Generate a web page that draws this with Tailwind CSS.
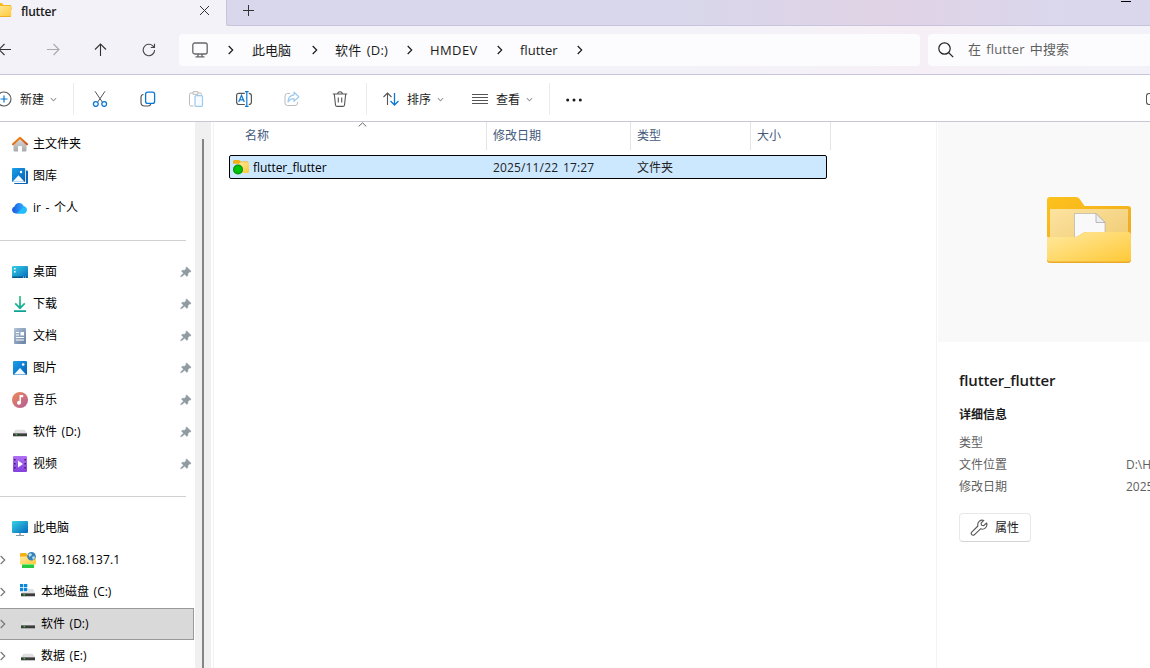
<!DOCTYPE html>
<html lang="zh-CN">
<head>
  <meta charset="UTF-8" />
  <meta name="viewport" content="width=device-width, initial-scale=1.0"/>
  <title>flutter - 文件资源管理器</title>
  <script src="https://cdn.jsdelivr.net/npm/@tailwindcss/browser@4"></script>
  <style>
    body {
      font-family: 'Open Sans', 'Noto Sans CJK SC', sans-serif;
      word-spacing: 1.5px;
    }
  </style>
</head>
<body class="w-[1150px] h-[668px] overflow-hidden bg-white text-xs leading-4 text-black flex flex-col">

  <!-- 公用图标 -->
  <svg class="absolute w-0 h-0">
    <defs>
      <linearGradient id="gFolder" x1="0" y1="0" x2="1" y2="1"><stop offset="0" stop-color="#ffe9a0"/><stop offset="1" stop-color="#ffc937"/></linearGradient>
      <linearGradient id="gTab" x1="0" y1="0" x2="1" y2="1"><stop offset="0" stop-color="#fdc21c"/><stop offset="1" stop-color="#eeaa1e"/></linearGradient>
      <linearGradient id="gInner" x1="0" y1="0" x2="1" y2="1"><stop offset="0" stop-color="#fde3a0"/><stop offset="1" stop-color="#eec970"/></linearGradient>
      <linearGradient id="gBlue" x1="0" y1="0" x2="1" y2="1"><stop offset="0" stop-color="#1aa0ea"/><stop offset="1" stop-color="#0560b6"/></linearGradient>
      <linearGradient id="gCyan" x1="0" y1="0" x2="1" y2="1"><stop offset="0" stop-color="#34d3e4"/><stop offset="1" stop-color="#0868bd"/></linearGradient>
      <linearGradient id="gRoof" x1="0" y1="0" x2="1" y2="1"><stop offset="0" stop-color="#f9940c"/><stop offset="1" stop-color="#d04a1d"/></linearGradient>
      <linearGradient id="gHouse" x1="0" y1="0" x2="0" y2="1"><stop offset="0" stop-color="#dcdcdc"/><stop offset="1" stop-color="#a9a9a9"/></linearGradient>
      <linearGradient id="gCloud" x1="0" y1="0" x2="1" y2="0"><stop offset="0" stop-color="#1b57dc"/><stop offset=".5" stop-color="#258cf5"/><stop offset="1" stop-color="#2fc8ff"/></linearGradient>
      <linearGradient id="gDown" gradientUnits="userSpaceOnUse" x1="0" y1="0" x2="0" y2="16"><stop offset="0" stop-color="#3fc78d"/><stop offset="1" stop-color="#0aa095"/></linearGradient>
      <linearGradient id="gDoc" x1="0" y1="0" x2="1" y2="1"><stop offset="0" stop-color="#b3c3d8"/><stop offset="1" stop-color="#6681a3"/></linearGradient>
      <linearGradient id="gMusic" x1="0" y1="0" x2="1" y2="1"><stop offset="0" stop-color="#f08b55"/><stop offset="1" stop-color="#b05a9c"/></linearGradient>
      <linearGradient id="gVideo" x1="0" y1="0" x2="0" y2="1"><stop offset="0" stop-color="#b06ff4"/><stop offset="1" stop-color="#8440dd"/></linearGradient>
      <radialGradient id="gDot"><stop offset="0" stop-color="#00cf0c"/><stop offset=".7" stop-color="#00bb08"/><stop offset="1" stop-color="#00800a"/></radialGradient>
    </defs>
    <symbol id="pin" viewBox="0 0 12 12"><path d="M6.600 1 11 5.200 10.300 6.100 9.300 6 8 7.400 7.700 9.800 6.800 10.300 4.600 8.200 1.800 10.600.8 10.800 1 9.800 3.600 7.200 1.600 5.200 2.200 4.400 4.800 4.200 6.100 2.900 5.900 1.800Z" fill="#8f9aa1" stroke="#8f9aa1" stroke-width=".6" stroke-linejoin="round"/></symbol>
    <symbol id="drive" viewBox="0 0 16 16"><path d="M3.600 5.700h8.800L15 9H1z" fill="#e0e0e2"/><path d="M1 9h14v3.300H1z" fill="#3c3c3c"/><path d="M1 9h14v1H1z" fill="#777"/><path d="M3.600 10h1.400v1.300H3.600z" fill="#22d922"/></symbol>
    <symbol id="chev" viewBox="0 0 8 10"><path d="M1.700 1 5.700 5 1.700 9" fill="none" stroke="currentColor" stroke-width="1.200"/></symbol>
    <symbol id="down" viewBox="0 0 8 5"><path d="M1 1 4 4 7 1" fill="none" stroke="#999" stroke-width="1.200"/></symbol>
  </svg>

  <!-- 标签栏 -->
  <div class="h-[26px] shrink-0 flex bg-linear-to-r from-[#d9d7eb] from-60% via-[#e1d3e6] via-77% to-[#dad7ec] to-93%">
    <div class="w-[226px] h-[26px] flex items-center bg-[#f3f2f9]">
      <svg class="-ml-[4px] mb-[6px] w-4 h-4 shrink-0" viewBox="0 0 16 16"><path d="M0 2.500q0-1.500 1.500-1.500H6l1.500 2H14q1.500 0 1.500 1.500V8H0z" fill="url(#gTab)"/><rect y="4" width="15.200" height="11" rx="1.200" fill="url(#gFolder)"/><path d="M.5 14.500h14.200" stroke="#eeb02a"/></svg>
      <span class="ml-[9px] mb-[3px] text-xs font-semibold text-[#1b1b1b] tracking-[-0.25px]">flutter</span>
      <svg class="ml-auto mr-[16px] mb-[6px] w-[11px] h-[11px]" viewBox="0 0 11 11" stroke="#333" fill="none"><path d="m1 1 9 9M10 1l-9 9"/></svg>
    </div>
    <div class="flex-1 flex border-l border-b border-[#c9c3dc] rounded-bl">
      <svg class="ml-[16px] mt-[5px] w-[11px] h-[11px]" viewBox="0 0 11 11" stroke="#333" fill="none"><path d="M5.500 0v11M0 5.500h11"/></svg>
      <div class="ml-auto mr-[19px] mt-px w-[10px] h-px bg-black"></div>
    </div>
  </div>

  <!-- 导航栏 -->
  <div class="h-[49px] shrink-0 flex items-center border-b border-[#c8c4da] bg-linear-to-r from-[#f3f2f9] from-60% via-[#f6f0f6] via-80% to-[#f3f2f9] to-95% text-[#1b1b1b]">
    <div class="flex -ml-[19px] w-[198px] shrink-0">
      <div class="w-12 flex justify-center"><svg class="w-[14px] h-[14px]" viewBox="0 0 14 14" fill="none" stroke="#333" stroke-width="1.100"><path d="M13 6.500H1M6.500 1 1 6.500 6.500 12"/></svg></div>
      <div class="w-12 flex justify-center"><svg class="w-[14px] h-[14px]" viewBox="0 0 14 14" fill="none" stroke="#aaa" stroke-width="1.100"><path d="M1 6.500h12M7.500 1 13 6.500 7.500 12"/></svg></div>
      <div class="w-12 flex justify-center"><svg class="w-[14px] h-[14px]" viewBox="0 0 14 14" fill="none" stroke="#333" stroke-width="1.100"><path d="M6.500 13V1M1 6.500 6.500 1 12 6.500"/></svg></div>
      <div class="w-12 flex justify-center"><svg class="w-[14px] h-[14px]" viewBox="0 0 14 14" fill="none" stroke="#444" stroke-width="1.100"><path d="M12.600 7A5.700 5.700 0 1 1 10.800 2.800L12.500 4.500M12.500.8v3.700H8.800"/></svg></div>
    </div>
    <div class="w-[741px] h-8 shrink-0 rounded bg-[#fcfcfe] flex items-center text-[13px]">
      <svg class="ml-[13px] w-4 h-4" viewBox="0 0 16 16" fill="none" stroke="#666" stroke-width="1.300"><rect x=".8" y="1" width="14.400" height="11" rx="2"/><path d="M6 12v2.500M10 12v2.500M3.500 14.800h9"/></svg>
      <svg class="ml-[19px] w-2 h-[10px]"><use href="#chev"/></svg>
      <span class="ml-[17px] w-[43px] whitespace-nowrap">此电脑</span>
      <svg class="ml-[16px] w-2 h-[10px]"><use href="#chev"/></svg>
      <span class="ml-[16px] w-[55px] whitespace-nowrap tracking-[0.25px]">软件 (D:)</span>
      <svg class="ml-4 w-2 h-[10px]"><use href="#chev"/></svg>
      <span class="ml-[16px] w-[50px] whitespace-nowrap tracking-[0.4px]">HMDEV</span>
      <svg class="ml-4 w-2 h-[10px]"><use href="#chev"/></svg>
      <span class="ml-[16px] w-[38px] whitespace-nowrap">flutter</span>
      <svg class="ml-[18px] w-2 h-[10px]"><use href="#chev"/></svg>
    </div>
    <div class="ml-2 flex-1 h-8 rounded-l bg-[#fcfcfe] flex items-center text-[13px] text-[#5f5f5f]">
      <svg class="ml-[10px] w-4 h-4" viewBox="0 0 16 16" fill="none" stroke="#222" stroke-width="1.200"><circle cx="6.500" cy="6.500" r="5.700"/><path d="m10.500 10.500 4.700 4.700"/></svg>
      <span class="ml-[14px] mb-[2px] tracking-[0.15px]">在 flutter 中搜索</span>
    </div>
  </div>

  <!-- 工具栏 -->
  <div class="h-[47px] shrink-0 flex items-center border-b border-[#c9c6d8] text-[#1b1b1b] whitespace-nowrap pt-px">
    <svg class="-ml-[4px] w-4 h-4 shrink-0" viewBox="0 0 16 16" fill="none"><circle cx="8" cy="8" r="7" stroke="#555" stroke-width="1.100"/><path d="M8 4.500v7M4.500 8h7" stroke="#0a78d4" stroke-width="1.200"/></svg>
    <span class="ml-[8px] mt-[2px] w-6">新建</span>
    <svg class="ml-[6px] mt-px w-[7px] h-[5px]"><use href="#down"/></svg>
    <div class="ml-[16px] w-px h-8 bg-[#ebebeb]"></div>
    <div class="flex">
      <div class="w-[52px] flex justify-center"><svg class="w-4 h-4" viewBox="0 0 16 16" fill="none"><path d="M3 .3 10.300 11M13 .3 5.700 11" stroke="#555"/><circle cx="3.800" cy="13" r="2.400" stroke="#0a78d4" stroke-width="1.300"/><circle cx="12.200" cy="13" r="2.400" stroke="#0a78d4" stroke-width="1.300"/></svg></div>
      <div class="w-[44px] flex justify-center"><svg class="w-4 h-4" viewBox="0 0 16 16" fill="none"><path d="M3.500 3.500Q1 3.800 1 6v5.500Q1 15 4.500 15H8q2.300 0 2.800-2" stroke="#555" stroke-width="1.200"/><rect x="5.600" y="1.100" width="9" height="11.300" rx="2" stroke="#0a78d4" stroke-width="1.300"/></svg></div>
      <div class="w-[52px] flex justify-center"><svg class="w-4 h-4" viewBox="0 0 16 16" fill="none"><path d="M5.500 15H3q-1.500 0-1.500-1.500V3.500Q1.500 2 3 2h9q1.500 0 1.500 1.500V4" stroke="#bbb"/><path d="M5 .7h5v2.600H5z" stroke="#bbb" fill="#fff"/><rect x="7" y="4.700" width="7.500" height="10.700" rx="1.200" stroke="#9cc9ed" stroke-width="1.200" fill="#f7fbff"/></svg></div>
      <div class="w-[44px] flex justify-center"><svg class="w-4 h-4" viewBox="0 0 16 16" fill="none"><path d="M8.800 13.500H3Q.6 13.500.6 11V4.700Q.6 2.300 3 2.300h5.800M12.800 2.300q2.600 0 2.600 2.400V11q0 2.500-2.600 2.500" stroke="#555" stroke-width="1.200"/><path d="M10.800.6v14.800M9 .6h3.600M9 15.400h3.600M2.700 11 5.500 4.300 8.300 11M3.700 8.800h3.600" stroke="#0a78d4" stroke-width="1.200"/></svg></div>
      <div class="w-[52px] flex justify-center"><svg class="w-4 h-4" viewBox="0 0 16 16" fill="none"><path d="M6 2.500H3.500Q1 2.500 1 5v7q0 2.500 2.500 2.500H11q2.500 0 2.500-2.500v-1" stroke="#bbb"/><path d="m10 1.200 4.800 4.600L10 10.400V7.700Q6 7.700 4 11q.2-6.500 6-7.200z" stroke="#9cc9ed" stroke-width="1.200" stroke-linejoin="round"/></svg></div>
      <div class="w-[44px] flex justify-center"><svg class="w-4 h-4" viewBox="0 0 16 16" fill="none" stroke="#555" stroke-width="1.100"><path d="M.8 3h14.400M5.700 3Q5.700.7 8 .7T10.300 3M2.300 3l1.200 11q.2 1.400 1.500 1.400h6q1.300 0 1.500-1.400L13.700 3M6.300 6.500v5M9.700 6.500v5"/></svg></div>
    </div>
    <div class="ml-[4px] w-px h-8 bg-[#ebebeb]"></div>
    <svg class="ml-[16px] w-4 h-4" viewBox="0 0 16 16" fill="none" stroke-width="1.100"><path d="M4.500 14V2M.5 6l4-4 4 4" stroke="#555"/><path d="M11.500 2v12M7.500 10l4 4 4-4" stroke="#0a78d4" stroke-width="1.300"/></svg>
    <span class="ml-[8px] mt-[2px] w-6">排序</span>
    <svg class="ml-[6px] mt-px w-[7px] h-[5px]"><use href="#down"/></svg>
    <svg class="ml-[28px] w-4 h-4" viewBox="0 0 16 16" stroke="#555"><path d="M0 3.500h16M0 6.500h16M0 9.500h16M0 12.500h16"/></svg>
    <span class="ml-[8px] mt-[2px] w-6">查看</span>
    <svg class="ml-[6px] mt-px w-[7px] h-[5px]"><use href="#down"/></svg>
    <div class="ml-[16px] w-px h-8 bg-[#ebebeb]"></div>
    <svg class="ml-[16px] mt-[2px] w-4 h-4" viewBox="0 0 16 16" fill="#1b1b1b"><circle cx="1.700" cy="8" r="1.500"/><circle cx="8" cy="8" r="1.500"/><circle cx="14.300" cy="8" r="1.500"/></svg>
    <div class="ml-auto w-1 h-3 border border-r-0 border-[#555] rounded-l-[3px]"></div>
  </div>

  <div class="flex flex-1 min-h-0">
    <!-- 侧边栏 -->
    <div class="w-[195px] shrink-0 pt-[6px] overflow-hidden whitespace-nowrap">
      <div class="h-8 pl-3 flex items-center gap-[5px]">
        <svg class="w-4 h-4" viewBox="0 0 16 16"><path d="M1.500 8 8 2l6.500 6v6.500q0 1-1 1H10V11q0-1-1-1H7q-1 0-1 1v4.500H2.500q-1 0-1-1z" fill="url(#gHouse)"/><path d="M1 8.200 8 1.700l7 6.500" fill="none" stroke="url(#gRoof)" stroke-width="2" stroke-linecap="round" stroke-linejoin="round"/></svg>
        <span>主文件夹</span>
      </div>
      <div class="h-8 pl-3 flex items-center gap-[5px]">
        <svg class="w-4 h-4" viewBox="0 0 16 16"><path d="M14 2.500h1q1 0 1 1V15q0 1-1 1H3q-1 0-1-1z" fill="#0c66b5"/><path d="M0 0h14v15H0z" fill="#fff"/><rect width="13.200" height="14" rx="1" fill="url(#gBlue)"/><path d="M.6 13.800 6.500 7.300l6 6.500z" fill="#f5faff"/><circle cx="9" cy="4" r="1.200" fill="#fff"/></svg>
        <span>图库</span>
      </div>
      <div class="h-8 pl-3 flex items-center gap-[5px]">
        <svg class="w-4 h-4" viewBox="0 0 16 16"><path d="M3.600 13.400A3.600 3.600 0 0 1 2.500 6.400 5 5 0 0 1 11.700 5.900 3.900 3.900 0 0 1 12.200 13.400z" fill="url(#gCloud)"/><path d="M5 13.400 10 8.200q2-1.600 4.200-.2A3.800 3.800 0 0 1 12.200 13.400z" fill="#22bdfc"/></svg>
        <span>ir - 个人</span>
      </div>
      <div class="h-8 flex items-center"><div class="w-[186px] h-px mt-px bg-[#d0d0d0]"></div></div>

      <div class="h-8 pl-3 pr-[3px] flex items-center gap-[5px]">
        <svg class="w-4 h-4" viewBox="0 0 16 16"><rect y="2" width="16" height="12" rx="1" fill="url(#gCyan)"/><path d="M0 12.600h16V13q0 1-1 1H1q-1 0-1-1z" fill="#075a91"/><path d="M2 4h1.600v1.600H2zM2 7h1.600v1.600H2zM11 12.700h1v.8h-1zM13 12.700h1v.8h-1z" fill="#fff"/></svg>
        <span>桌面</span><svg class="ml-auto w-3 h-3"><use href="#pin"/></svg>
      </div>
      <div class="h-8 pl-3 pr-[3px] flex items-center gap-[5px]">
        <svg class="w-4 h-4" viewBox="0 0 16 16" fill="none" stroke="url(#gDown)" stroke-width="1.800"><path d="M8 0v12M3.200 7.400 8 12.200l4.800-4.800M2 15.100h12"/></svg>
        <span>下载</span><svg class="ml-auto w-3 h-3"><use href="#pin"/></svg>
      </div>
      <div class="h-8 pl-3 pr-[3px] flex items-center gap-[5px]">
        <svg class="w-4 h-4" viewBox="0 0 16 16"><rect x="2" width="12" height="16" rx="1" fill="url(#gDoc)"/><path d="M4 4.500h3M4 7h3M4 9.500h8M4 12h8" stroke="#fff" stroke-width="1.100"/><path d="M8.500 4H12v3.500H8.500z" fill="#fff"/></svg>
        <span>文档</span><svg class="ml-auto w-3 h-3"><use href="#pin"/></svg>
      </div>
      <div class="h-8 pl-3 pr-[3px] flex items-center gap-[5px]">
        <svg class="w-4 h-4" viewBox="0 0 16 16"><rect x="1" y="1" width="14" height="14" rx="1" fill="url(#gBlue)"/><path d="m2 14.500 6-6.500 6 6.500z" fill="#f5faff"/><circle cx="11.200" cy="4.500" r="1.300" fill="#fff"/></svg>
        <span>图片</span><svg class="ml-auto w-3 h-3"><use href="#pin"/></svg>
      </div>
      <div class="h-8 pl-3 pr-[3px] flex items-center gap-[5px]">
        <svg class="w-4 h-4" viewBox="0 0 16 16"><circle cx="8" cy="8" r="8" fill="url(#gMusic)"/><path d="M7.500 3h3.700v2.300H9v5.500a2 2 0 1 1-1.500-2z" fill="#fff"/></svg>
        <span>音乐</span><svg class="ml-auto w-3 h-3"><use href="#pin"/></svg>
      </div>
      <div class="h-8 pl-3 pr-[3px] flex items-center gap-[5px]">
        <svg class="w-4 h-4"><use href="#drive"/></svg>
        <span>软件 (D:)</span><svg class="ml-auto w-3 h-3"><use href="#pin"/></svg>
      </div>
      <div class="h-8 pl-3 pr-[3px] flex items-center gap-[5px]">
        <svg class="w-4 h-4" viewBox="0 0 16 16"><rect x="1" width="14" height="16" rx="1" fill="url(#gVideo)"/><path d="M2 3h1.600v1.600H2zM2 7h1.600v1.600H2zM2 11h1.600v1.600H2zM12.400 3H14v1.600h-1.600zM12.400 7H14v1.600h-1.600zM12.400 11H14v1.600h-1.600z" fill="#3e1f75"/><path d="M6 4.500 11 8l-5 3.500z" fill="#fff"/></svg>
        <span>视频</span><svg class="ml-auto w-3 h-3"><use href="#pin"/></svg>
      </div>
      <div class="h-8 flex items-center"><div class="w-[186px] h-px mt-px bg-[#d0d0d0]"></div></div>

      <div class="h-8 pl-3 flex items-center gap-[5px]">
        <svg class="w-4 h-4" viewBox="0 0 16 16"><rect y="1" width="16" height="12" rx="1" fill="url(#gCyan)"/><path d="M7 13h2v2H7z" fill="#a9b3bb"/><path d="M4 15h8v1H4z" fill="#8d9aa4"/></svg>
        <span>此电脑</span>
      </div>
      <div class="h-8 flex items-center gap-[5px]">
        <svg class="-ml-[1px] mr-[8px] w-2 h-[10px] text-[#777]"><use href="#chev"/></svg>
        <svg class="w-4 h-4" viewBox="0 0 16 16"><path d="M0 2q0-1 1-1h5l1.500 2H14v9H0z" fill="#f4af13"/><rect y="4.500" width="16" height="8" rx="1" fill="url(#gFolder)"/><circle cx="11.500" cy="4.300" r="4.300" fill="#3682b8"/><path d="M8.200 2.500 11 1l1 2-2.500 2zM12 5l2.500-1 .5 2-2 2z" fill="#b9dcee"/><path d="M2 12h12v4H2z" fill="#27c93f"/><path d="M2 12h12v1H2z" fill="#75ed78"/></svg>
        <span class="tracking-[0.08px]">192.168.137.1</span>
      </div>
      <div class="h-8 flex items-center gap-[5px]">
        <svg class="-ml-[1px] mr-[8px] w-2 h-[10px] text-[#777]"><use href="#chev"/></svg>
        <svg class="w-4 h-4" viewBox="0 0 16 16"><path d="M6 5h7l2 4H1z" fill="#e0e0e2"/><path d="M1 9h14v3.300H1z" fill="#3c3c3c"/><path d="M1 9h14v1H1z" fill="#777"/><path d="M3.500 10h1.400v1.400H3.500z" fill="#22d922"/><path d="M0 0h8v8H0z" fill="#fff"/><path d="M0 0h3.300v3.300H0zM4 0h3.300v3.300H4zM0 4h3.300v3.300H0zM4 4h3.300v3.300H4z" fill="#0a87d8"/></svg>
        <span>本地磁盘 (C:)</span>
      </div>
      <div class="h-8 w-[194px] flex items-center gap-[5px] bg-[#d9d9d9] border border-l-0 border-[#999]">
        <svg class="-ml-[1px] mr-[8px] w-2 h-[10px] text-[#777]"><use href="#chev"/></svg>
        <svg class="w-4 h-4"><use href="#drive"/></svg>
        <span>软件 (D:)</span>
      </div>
      <div class="h-8 flex items-center gap-[5px]">
        <svg class="-ml-[1px] mr-[8px] w-2 h-[10px] text-[#777]"><use href="#chev"/></svg>
        <svg class="w-4 h-4"><use href="#drive"/></svg>
        <span>数据 (E:)</span>
      </div>
    </div>

    <!-- 滚动条 -->
    <div class="w-4 shrink-0 bg-[#f0f0f0] pt-[17px] pl-[7px]">
      <div class="w-[2px] h-full bg-[#858585]"></div>
    </div>

    <!-- 文件列表 -->
    <div class="ml-[2px] w-[723px] shrink-0 border-l border-[#f3f3f3]">
      <div class="h-7 flex text-[#44597a] leading-[27px]">
        <div class="relative w-[273px] pl-[31px] border-r border-[#e5e5e5]">
          名称
          <svg class="absolute left-[144px] top-0 w-[9px] h-[5px]" viewBox="0 0 9 5" fill="none" stroke="#666"><path d="M.7 4.500 4.500.8l3.800 3.700"/></svg>
        </div>
        <div class="w-36 pl-[6px] border-r border-[#e5e5e5]">修改日期</div>
        <div class="w-[120px] pl-[6px] border-r border-[#e5e5e5]">类型</div>
        <div class="w-20 pl-[6px] border-r border-[#e5e5e5]">大小</div>
      </div>
      <div class="mt-[5px] ml-[15px] w-[598px] h-6 flex items-center bg-[#cce8ff] border border-black rounded-[2px]">
        <svg class="ml-[3px] w-4 h-4" viewBox="0 0 16 16"><rect y="3" x="5" width="11" height="11" rx="1" fill="url(#gFolder)"/><path d="M0 2.500q0-1.500 1.500-1.500H6l1.800 1.500H15v.8H7.500L6 4.800H0z" fill="#f4af13"/><circle cx="5" cy="10.500" r="5" fill="url(#gDot)"/></svg>
        <span class="ml-1 mt-[2px] w-[240px] tracking-[-0.06px]">flutter_flutter</span>
        <span class="mt-[2px] w-36 text-[#222] tracking-[0.15px]">2025/11/22 17:27</span>
        <span class="mt-[2px] text-[#222]">文件夹</span>
      </div>
    </div>

    <!-- 详细信息窗格 -->
    <div class="flex-1 min-w-0 border-l border-[#f3f3f3] overflow-hidden">
      <div class="ml-px h-[220px] bg-[#f9f9f9] flex pt-[75px] pl-[109px]">
        <svg class="w-[84px] h-[66px] shrink-0" viewBox="0 0 84 66">
          <path d="M0 3q0-3 3-3h26q2 0 3.500 1.700L37.500 9H81q3 0 3 3v28H0z" fill="url(#gTab)"/>
          <rect x="3" y="12" width="78" height="40" rx="1" fill="url(#gInner)"/>
          <path d="M27.500 16.500H49l9 9V45H27.500z" fill="#f9f9f9" stroke="#aaa" stroke-width=".6"/>
          <path d="M49 16.500v9h9z" fill="#eee" stroke="#aaa" stroke-width=".8"/>
          <path d="M0 43q0-3 3-3h24q3 0 5-1.500l3-2Q37 35 40 35h41q3 0 3 3v25q0 3-3 3H3q-3 0-3-3z" fill="#eaaa28"/>
          <path d="M0 43q0-3 3-3h24q3 0 5-1.500l3-2Q37 35 40 35h41q3 0 3 3v23.500q0 3-3 3H3q-3 0-3-3z" fill="url(#gFolder)"/>
        </svg>
      </div>
      <div class="pl-[22px] pt-[28px] text-[#5f5f5f] whitespace-nowrap">
        <h2 class="text-[15px] leading-5 font-semibold text-[#1b1b1b] tracking-[-0.15px]">flutter_flutter</h2>
        <h3 class="mt-[17px] text-xs font-bold text-[#1b1b1b]">详细信息</h3>
        <div class="mt-[9px] grid grid-cols-[167px_1fr] leading-[22px]">
          <span>类型</span><span></span>
          <span>文件位置</span><span>D:\H</span>
          <span>修改日期</span><span>2025</span>
        </div>
        <button class="mt-[15px] w-[72px] h-[29px] flex items-center rounded border border-[#e8e8e8] border-b-[#d4d4d4] text-[#1b1b1b]">
          <svg class="ml-[10px] w-[18px] h-[18px]" viewBox="0 0 18 18" fill="none" stroke="#555" stroke-width="1.100" stroke-linejoin="round"><path d="M13.800 1.400A4.600 4.600 0 0 0 7.900 7L1.700 13.200q-1 1.200 0 2.400 1.300 1.200 2.600.2L10.500 9.800A4.600 4.600 0 0 0 16.600 4L13.700 6.700 11.500 6.200 11.100 4.200z"/></svg>
          <span class="ml-[7px]">属性</span>
        </button>
      </div>
    </div>
  </div>

</body>
</html>
